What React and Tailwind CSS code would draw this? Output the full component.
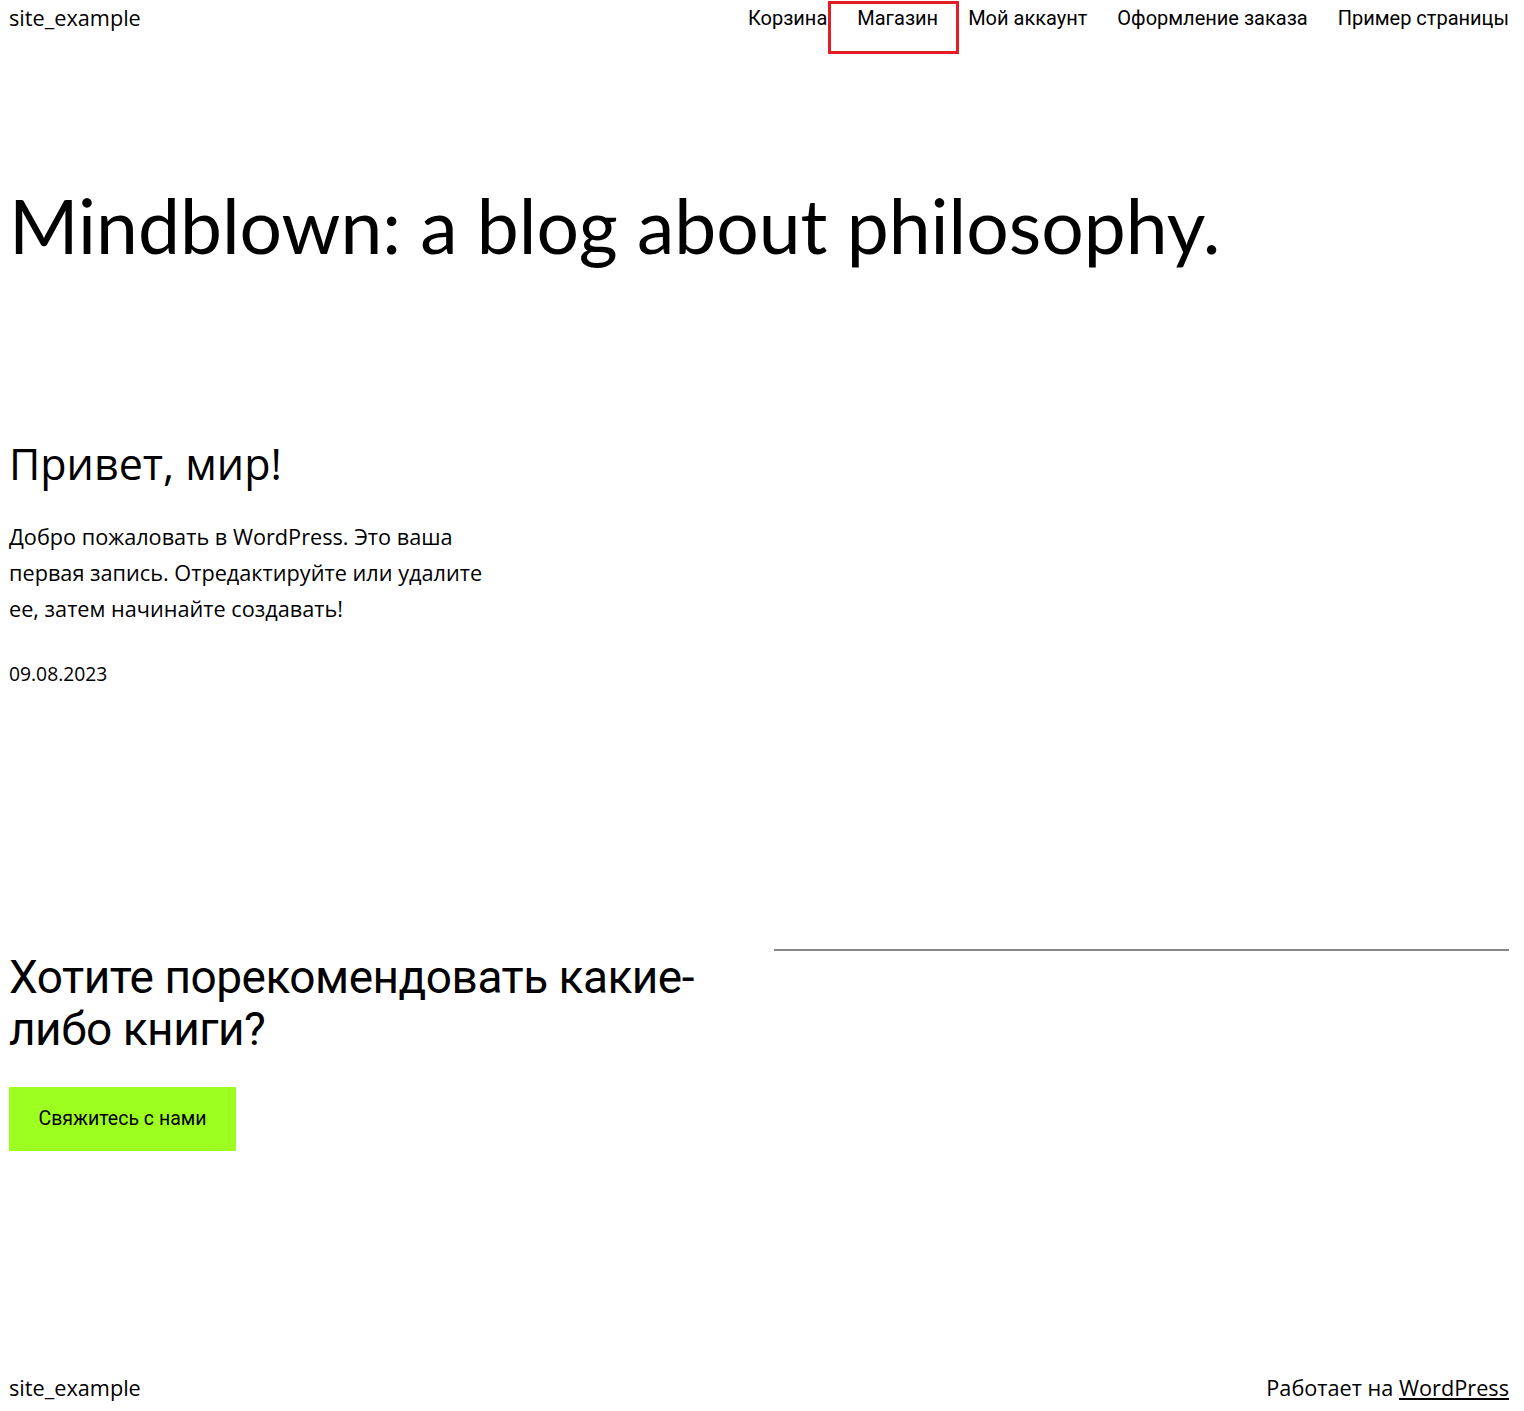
import React from "react";

const navItems = ["Корзина", "Магазин", "Мой аккаунт", "Оформление заказа", "Пример страницы"];

const App = () => {
  return (
    <div className="relative flex min-h-[1411px] flex-col bg-white pl-[9px] pr-[15px] text-black font-['Open_Sans','Noto_Sans',sans-serif]">
      {/* header */}
      <header className="flex h-[36px] items-center justify-between">
        <a className="text-[21.7px] leading-none">site_example</a>
        <nav className="flex items-center gap-[30px] font-['Roboto',sans-serif] text-[20px] leading-none">
          {navItems.map((item) => (
            <a key={item} className="relative">
              {item}
              {item === "Магазин" && (
                <span className="pointer-events-none absolute -left-[29px] -right-[21px] -top-[7px] h-[53px] border-[3px] border-[#e21d26]" />
              )}
            </a>
          ))}
        </nav>
      </header>

      <main className="flex flex-col">
        <h1 className="mt-[148px] font-['Lato',sans-serif] text-[75px] font-normal leading-[1.1]">
          Mindblown: a blog about philosophy.
        </h1>

        {/* posts */}
        <section className="mt-[170px] grid grid-cols-3 gap-[30px]">
          <article className="flex flex-col">
            <h2 className="text-[43px] leading-[1.25]">Привет, мир!</h2>
            <p className="mt-[29px] text-[21.7px] leading-[36px]">
              Добро пожаловать в WordPress. Это ваша
              <br />
              первая запись. Отредактируйте или удалите
              <br />
              ее, затем начинайте создавать!
            </p>
            <time className="mt-[37px] text-[19.3px] leading-none">09.08.2023</time>
          </article>
        </section>

        {/* call to action */}
        <section className="mt-[259px] grid grid-cols-2 gap-[30px]">
          <div className="flex flex-col items-start">
            <h2 className="mt-[8px] font-['Roboto',sans-serif] text-[46px] leading-[52px] tracking-[-0.5px]">
              Хотите порекомендовать какие-либо книги?
            </h2>
            <a className="mt-[32px] flex h-[64px] w-[227px] items-center justify-center bg-[#9dff20] font-['Roboto',sans-serif] text-[19.5px]">
              Свяжитесь с нами
            </a>
          </div>
          <div className="pt-[6px]">
            <hr className="border-t-2 border-[#888888]" />
          </div>
        </section>
      </main>

      <footer className="mt-auto flex h-[44px] items-center justify-between pb-[2px]">
        <a className="text-[21.7px] leading-none">site_example</a>
        <p className="text-[21.7px] leading-none">
          Работает на <a className="underline">WordPress</a>
        </p>
      </footer>
    </div>
  );
};

export default App;
